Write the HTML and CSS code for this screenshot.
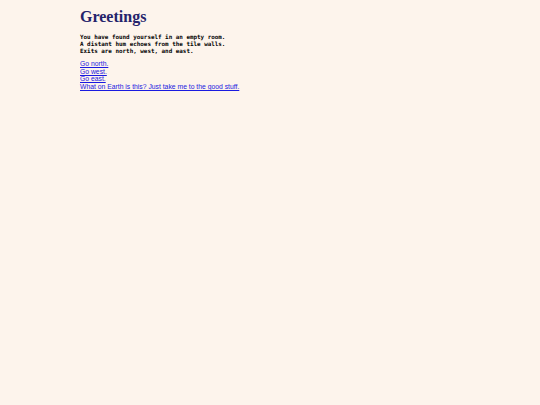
FILE: index.html
```html
<!DOCTYPE html>
<html>
<head>
<meta charset="utf-8">
<link rel="stylesheet" href="styles.css">
</head>
<body>
<main class="page">
  <h1 class="title">Greetings</h1>
  <pre class="story">You have found yourself in an empty room.
A distant hum echoes from the tile walls.
Exits are north, west, and east.</pre>
  <nav class="choices">
    <a href="#">Go north.</a>
    <a href="#">Go west.</a>
    <a href="#">Go east.</a>
    <a href="#">What on Earth is this? Just take me to the good stuff.</a>
  </nav>
</main>
</body>
</html>
```

FILE: styles.css
```css
html, body {
  margin: 0;
  padding: 0;
  background: #fdf4ec;
  height: 100%;
}
.page {
  width: 380px;
  margin: 0 auto;
  padding-top: 8px;
}
.title {
  margin: 0;
  font-family: "Liberation Serif", "Times New Roman", serif;
  font-weight: bold;
  font-size: 16px;
  line-height: 18px;
  color: #24236b;
}
.story {
  margin: 8px 0 0 0;
  font-family: "DejaVu Sans Mono", monospace;
  font-weight: bold;
  font-size: 5.9px;
  line-height: 7px;
  color: #000;
}
.choices {
  display: flex;
  flex-direction: column;
  align-items: flex-start;
  margin-top: 5px;
}
.choices a {
  font-family: "Liberation Sans", Arial, sans-serif;
  font-size: 6.8px;
  line-height: 7.67px;
  color: #1a1ae0;
}
```
